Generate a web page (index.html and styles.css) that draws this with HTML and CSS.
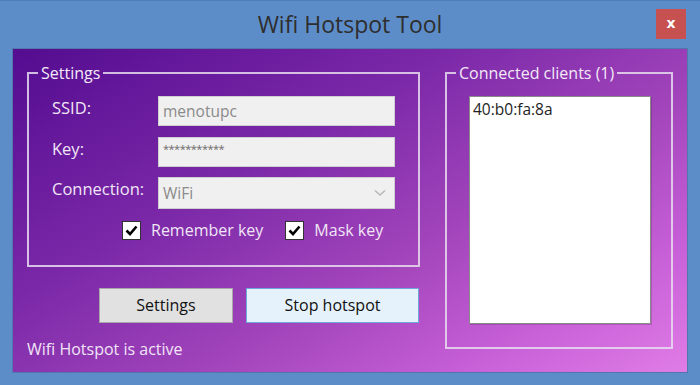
FILE: index.html
```html
<!DOCTYPE html>
<html>
<head>
<meta charset="utf-8">
<link rel="stylesheet" href="styles.css">
</head>
<body>
<div class="window">
  <div class="titlebar">
    <span class="title">Wifi Hotspot Tool</span>
    <div class="close">x</div>
  </div>
  <div class="content">
    <div class="left">
      <fieldset class="group settings">
        <legend>Settings</legend>
        <div class="inner">
          <div class="row">
            <span class="label">SSID:</span>
            <div class="input">menotupc</div>
          </div>
          <div class="row">
            <span class="label">Key:</span>
            <div class="input masked">***********</div>
          </div>
          <div class="row combo-row">
            <span class="label">Connection:</span>
            <div class="input combo">
              <span>WiFi</span>
              <svg class="chev" width="12" height="8" viewBox="0 0 12 8"><path d="M1 1.5 L6 6 L11 1.5" fill="none" stroke="#b8b8b8" stroke-width="1.6"/></svg>
            </div>
          </div>
          <div class="checks">
            <span class="check">
              <span class="box"><svg width="15" height="15" viewBox="0 0 15 15"><path d="M2.5 7.5 L6 11 L12.5 3.5" fill="none" stroke="#000" stroke-width="2.6"/></svg></span>
              <span>Remember key</span>
            </span>
            <span class="check">
              <span class="box"><svg width="15" height="15" viewBox="0 0 15 15"><path d="M2.5 7.5 L6 11 L12.5 3.5" fill="none" stroke="#000" stroke-width="2.6"/></svg></span>
              <span>Mask key</span>
            </span>
          </div>
        </div>
      </fieldset>
      <div class="buttons">
        <div class="btn">Settings</div>
        <div class="btn primary">Stop hotspot</div>
      </div>
      <div class="status">Wifi Hotspot is active</div>
    </div>
    <fieldset class="group clients">
      <legend>Connected clients (1)</legend>
      <div class="list">
        <div class="item">40:b0:fa:8a</div>
      </div>
    </fieldset>
  </div>
</div>
</body>
</html>
```
FILE: styles.css
```css
html, body {
  margin: 0;
  padding: 0;
}
body {
  width: 700px;
  height: 385px;
  overflow: hidden;
  font-family: "Open Sans", "Noto Sans", sans-serif;
}
.window {
  width: 700px;
  height: 385px;
  box-sizing: border-box;
  background: #5d8dc9;
  border-top: 1px solid #4e7db8;
  display: flex;
  flex-direction: column;
}
.titlebar {
  height: 47px;
  display: grid;
  grid-template-columns: 1fr auto 1fr;
  align-items: start;
}
.title {
  grid-column: 2;
  font-size: 23px;
  color: #2e2e2e;
  line-height: 30px;
  margin-top: 8px;
}
.close {
  grid-column: 3;
  justify-self: end;
  width: 30px;
  height: 30px;
  margin-top: 8px;
  margin-right: 14px;
  background: #c75050;
  color: #fff;
  font-family: "DejaVu Sans", sans-serif;
  font-weight: bold;
  font-size: 14px;
  line-height: 28px;
  text-align: center;
}
.content {
  margin: 0 12px;
  height: 325px;
  box-sizing: border-box;
  border: 1px solid #4f78ad;
  background: linear-gradient(150deg, #540c90 0%, #7a28a8 35%, #a446bc 62%, #c860d8 82%, #e07ce6 100%);
  display: flex;
  padding: 14px 0 0 14px;
  gap: 25px;
  color: #f1e6f6;
  font-size: 16px;
}
.left {
  width: 393px;
  display: flex;
  flex-direction: column;
}
.group {
  margin: 0;
  padding: 0;
  box-sizing: border-box;
  border: 2px solid rgba(232, 220, 240, 0.85);
}
.group legend {
  margin-left: 9px;
  padding: 0 3px;
  line-height: 20px;
  font-size: 16px;
  color: #f3e9f7;
}
.settings {
  width: 393px;
  height: 204px;
}
.inner {
  padding: 13px 0 0 23px;
  display: flex;
  flex-direction: column;
}
.row {
  display: flex;
  align-items: flex-start;
  height: 30px;
  margin-bottom: 11px;
}
.row + .row {
  margin-bottom: 10px;
}
.combo-row {
  height: 32px;
}
.label {
  width: 106px;
  font-size: 16.5px;
  line-height: 24px;
}
.input {
  width: 237px;
  height: 30px;
  box-sizing: border-box;
  background: #f0f0f0;
  border: 1px solid #cfcfcf;
  color: #8a8a8a;
  font-size: 15.5px;
  line-height: 28px;
  padding-left: 4px;
}
.masked {
  font-size: 11px;
  letter-spacing: -0.5px;
  line-height: 22px;
  color: #6a6a6a;
}
.combo {
  height: 32px;
  display: flex;
  justify-content: space-between;
  align-items: center;
  padding-right: 8px;
}
.checks {
  margin-top: 2px;
  margin-left: 70px;
  display: flex;
  gap: 22px;
}
.check {
  display: flex;
  align-items: center;
  gap: 10px;
  line-height: 19px;
}
.box {
  width: 19px;
  height: 19px;
  box-sizing: border-box;
  background: #fff;
  border: 1px solid #333;
  display: flex;
  align-items: center;
  justify-content: center;
}
.buttons {
  display: flex;
  margin: 21px 0 0 72px;
  gap: 13px;
}
.btn {
  width: 134px;
  height: 35px;
  box-sizing: border-box;
  background: #e1e1e1;
  border: 1px solid #a8a8a8;
  color: #111;
  font-size: 16px;
  line-height: 33px;
  text-align: center;
}
.btn.primary {
  width: 173px;
  background: #e5f1fb;
  border-color: #6fa6dc;
}
.status {
  margin-top: 16px;
  line-height: 20px;
  color: #f1e4f6;
}
.clients {
  width: 228px;
  height: 286px;
  padding: 13px 0 0 0;
}
.list {
  margin-left: 22px;
  width: 182px;
  height: 228px;
  box-sizing: border-box;
  background: #fff;
  border: 1px solid #8a8a8a;
  box-shadow: 1px 1px 0 rgba(0,0,0,0.15);
}
.item {
  color: #1e1e1e;
  font-size: 15.5px;
  line-height: 20px;
  padding: 2px 0 0 3px;
}
```
